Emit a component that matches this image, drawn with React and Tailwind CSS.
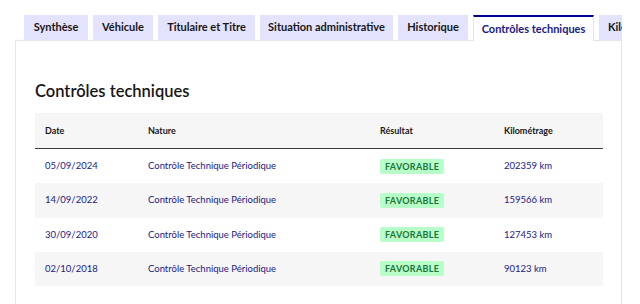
const tabs = [
  { label: "Synthèse", w: "w-[64px]" },
  { label: "Véhicule", w: "w-[60px]" },
  { label: "Titulaire et Titre", w: "w-[97px]" },
  { label: "Situation administrative", w: "w-[133px]" },
  { label: "Historique", w: "w-[70px]" },
  { label: "Contrôles techniques", w: "w-[121px]" },
  { label: "Kilométrage", w: "w-[80px]" },
];

const rows = [
  { date: "05/09/2024", nature: "Contrôle Technique Périodique", km: "202359 km" },
  { date: "14/09/2022", nature: "Contrôle Technique Périodique", km: "159566 km" },
  { date: "30/09/2020", nature: "Contrôle Technique Périodique", km: "127453 km" },
  { date: "02/10/2018", nature: "Contrôle Technique Périodique", km: "90123 km" },
];

export default function App() {
  const active = "Contrôles techniques";
  return (
    <div className="w-[640px] h-[304px] overflow-hidden bg-white font-['Lato',sans-serif] text-[#161616]">
      <div className="ml-[15px] w-[607px] pt-[15px] overflow-hidden">
        {/* tab list */}
        <div className="flex gap-[5px] pl-[9px] relative z-10">
          {tabs.map((t) =>
            t.label === active ? (
              <div
                key={t.label}
                className={`${t.w} shrink-0 h-[26px] flex items-center justify-center whitespace-nowrap bg-white border-t-2 border-[#000091] border-x border-x-[#e5e5e5] text-[11px] font-bold text-[#1a1a80] -mb-px`}
              >
                {t.label}
              </div>
            ) : (
              <div
                key={t.label}
                className={`${t.w} shrink-0 h-[25px] flex items-center justify-center whitespace-nowrap bg-[#e3e3fd] text-[11px] font-bold ${
                  t.label === "Kilométrage" ? "justify-start pl-[9px]" : ""
                }`}
              >
                {t.label}
              </div>
            )
          )}
        </div>

        {/* panel */}
        <div className="border border-[#e5e5e5] shadow-[0_1px_4px_rgba(0,0,0,0.06)] px-[19px] pt-[40px] pb-[20px]">
          <h2 className="text-[16.5px] font-semibold leading-[20px] mb-[12px]">Contrôles techniques</h2>

          <div className="w-[568px]">
            <div className="flex h-[36px] items-center bg-[#f6f6f6] border-b border-[#3a3a3a] text-[9px] font-bold">
              <div className="w-[113px] pl-[10px]">Date</div>
              <div className="w-[232px]">Nature</div>
              <div className="w-[124px]">Résultat</div>
              <div>Kilométrage</div>
            </div>
            {rows.map((r, i) => (
              <div
                key={r.date}
                className={`flex h-[34.3px] items-center text-[9.5px] text-[#22207e] ${
                  i % 2 === 1 ? "bg-[#f6f6f6]" : "bg-white"
                }`}
              >
                <div className="w-[113px] pl-[10px]">{r.date}</div>
                <div className="w-[232px]">{r.nature}</div>
                <div className="w-[124px]">
                  <span className="inline-block bg-[#b8fec9] text-[#18753c] font-bold text-[9px] tracking-[0.3px] px-[5px] leading-[15px] rounded-[2px]">
                    FAVORABLE
                  </span>
                </div>
                <div>{r.km}</div>
              </div>
            ))}
          </div>
        </div>
      </div>
    </div>
  );
}
